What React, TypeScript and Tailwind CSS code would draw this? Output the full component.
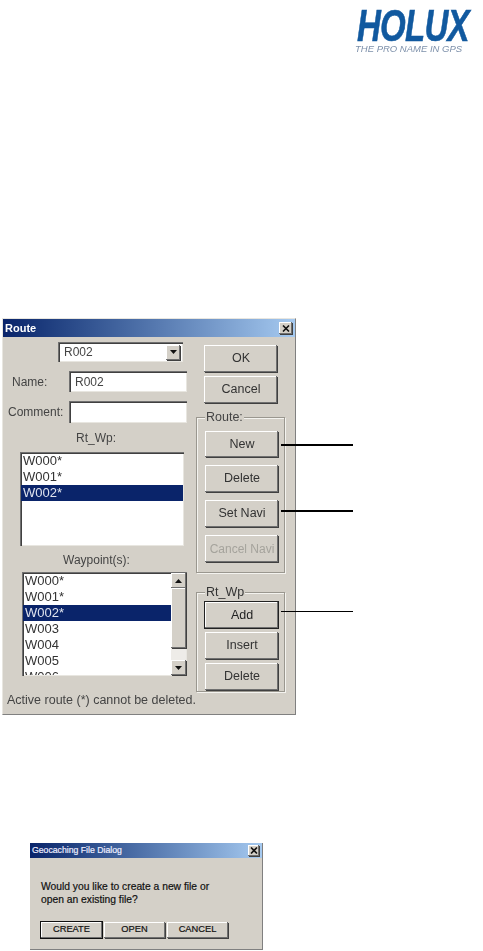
import React from 'react';

const bevel = 'bg-[#d4d0c8] shadow-[inset_-1px_-1px_0_#707070,inset_1px_1px_0_#ffffff,1px_1px_0_#404040]';
const sunken = 'bg-white shadow-[inset_1px_1px_0_#707070,inset_2px_2px_0_#404040,inset_-1px_-1px_0_#e8e6e0]';

function Btn({ label, className = '' }: { label: string; className?: string }) {
 return (
  <div className={`ml-[8px] w-[73px] pl-[1px] flex items-center justify-center text-[12.500px] text-[#333] ${bevel} ${className}`}>
   {label}
  </div>
 );
}

function Arrow({ up = false }: { up?: boolean }) {
 return (
  <svg width="7" height="4" viewBox="0 0 7 4" className={up ? 'rotate-180' : ''}>
   <path d="M0 0h7L3.500 4z" fill="#111" />
  </svg>
 );
}

function CloseBox({ size }: { size: string }) {
 return (
  <div className={`${size} flex items-center justify-center ${bevel}`}>
   <svg width="8" height="7" viewBox="0 0 8 7">
    <path d="M1 0.500l6 6M7 0.500l-6 6" stroke="#111" strokeWidth="1.600" />
   </svg>
  </div>
 );
}

function ListRow({ text, selected = false }: { text: string; selected?: boolean }) {
 return (
  <div className={`h-[16px] leading-[16px] pl-[2px] text-[13px] ${selected ? 'bg-[#0a246a] text-[#dfe3ee]' : 'text-[#333]'}`}>
   {text}
  </div>
 );
}

function RouteDialog() {
 return (
  <div className="relative ml-[2px] w-[294px] h-[397px] bg-[#d4d0c8] border border-[#e8e6e0] border-r-[#808080] border-b-[#808080] text-[12px] blur-[0.5px]">
   <div className="h-[18px] flex items-center justify-between pl-[2px] pr-[3px] bg-gradient-to-r from-[#0a246a] to-[#a6caf0]">
    <span className="text-[11px] font-bold text-white">Route</span>
    <CloseBox size="w-[13px] h-[12px]" />
   </div>

   <div className="flex">
    {/* left column */}
    <div className="w-[193px]">
     <div className={`mt-[5px] ml-[55px] w-[125px] h-[20px] flex items-center justify-between pl-[6px] pr-[3px] text-[#444] ${sunken}`}>
      <span>R002</span>
      <div className={`w-[14px] h-[15px] flex items-center justify-center ${bevel}`}>
       <Arrow />
      </div>
     </div>

     <div className="mt-[9px] flex items-center h-[21px]">
      <span className="ml-[9px] w-[57px] text-[#444]">Name:</span>
      <div className={`w-[118px] h-[21px] flex items-center pl-[6px] text-[#444] ${sunken}`}>R002</div>
     </div>
     <div className="mt-[9px] flex items-center h-[22px]">
      <span className="ml-[5px] w-[61px] text-[#444]">Comment:</span>
      <div className={`w-[118px] h-[22px] ${sunken}`} />
     </div>

     <div className="mt-[7px] ml-[73px] h-[16px] leading-[16px] text-[#444]">Rt_Wp:</div>
     <div className={`mt-[6px] ml-[17px] w-[164px] h-[94px] pt-[1px] px-[1px] ${sunken}`}>
      <ListRow text="W000*" />
      <ListRow text="W001*" />
      <ListRow text="W002*" selected />
     </div>

     <div className="mt-[6px] ml-[60px] h-[16px] leading-[16px] text-[#444]">Waypoint(s):</div>
     <div className={`mt-[4px] ml-[19px] w-[165px] h-[104px] flex p-[1px] overflow-hidden ${sunken}`}>
      <div className="flex-1 h-[102px] overflow-hidden">
       <ListRow text="W000*" />
       <ListRow text="W001*" />
       <ListRow text="W002*" selected />
       <ListRow text="W003" />
       <ListRow text="W004" />
       <ListRow text="W005" />
       <ListRow text="W006" />
      </div>
      <div className="w-[15px] h-[102px] flex flex-col bg-[#eeece8]">
       <div className={`h-[15px] flex items-center justify-center ${bevel}`}>
        <Arrow up />
       </div>
       <div className={`h-[60px] ${bevel}`} />
       <div className="flex-1" />
       <div className={`h-[15px] flex items-center justify-center ${bevel}`}>
        <Arrow />
       </div>
      </div>
     </div>

     <div className="mt-[16px] ml-[4px] h-[16px] leading-[16px] whitespace-nowrap text-[12.500px] text-[#444]">
      Active route (*) cannot be deleted.
     </div>
    </div>

    {/* right column */}
    <div className="w-[89px] pt-[8px]">
     <Btn label="OK" className="h-[27px]" />
     <Btn label="Cancel" className="h-[27px] mt-[4px]" />

     <div className="relative mt-[14px] h-[156px] pt-[13px] border border-[#9a978f] shadow-[inset_1px_1px_0_#f4f3ef,1px_1px_0_#f4f3ef]">
      <span className="absolute -top-[8px] left-[8px] px-[1px] bg-[#d4d0c8] leading-[15px] text-[12.500px] text-[#444]">Route:</span>
      <Btn label="New" className="h-[26px]" />
      <Btn label="Delete" className="h-[27px] mt-[8px]" />
      <Btn label="Set Navi" className="h-[27px] mt-[8px]" />
      <Btn label="Cancel Navi" className="h-[27px] mt-[8px] !text-[12px] !text-[#a5a39c]" />
     </div>

     <div className="relative mt-[19px] h-[100px] pt-[9px] border border-[#9a978f] shadow-[inset_1px_1px_0_#f4f3ef,1px_1px_0_#f4f3ef]">
      <span className="absolute -top-[8px] left-[8px] px-[1px] bg-[#d4d0c8] leading-[15px] text-[12.500px] text-[#333]">Rt_Wp</span>
      <Btn label="Add" className="h-[26px] outline outline-1 outline-[#222] !text-[#222]" />
      <Btn label="Insert" className="h-[27px] mt-[4px]" />
      <Btn label="Delete" className="h-[27px] mt-[4px]" />
     </div>
    </div>
   </div>
  </div>
 );
}

function GeoDialog() {
 return (
  <div className="ml-[30px] mt-[128px] w-[233px] h-[107px] bg-[#d4d0c8] border-b border-r border-[#808080] text-[10.300px] text-[#111] [-webkit-text-stroke:0.2px]">
   <div className="h-[15px] flex items-center justify-between pl-[2px] pr-[3px] bg-gradient-to-r from-[#0a246a] to-[#a6caf0]">
    <span className="text-[8.700px] text-[#eef]">Geocaching File Dialog</span>
    <CloseBox size="w-[11px] h-[11px]" />
   </div>
   <div className="mt-[22px] ml-[11px] leading-[13px]">
    <div>Would you like to create a new file or</div>
    <div>open an existing file?</div>
   </div>
   <div className="mt-[16px] ml-[11px] flex h-[16px] text-[9.300px]">
    <div className={`w-[61px] flex items-center justify-center outline outline-1 outline-[#111] ${bevel}`}>CREATE</div>
    <div className={`ml-[2px] w-[61px] flex items-center justify-center ${bevel}`}>OPEN</div>
    <div className={`ml-[2px] w-[61px] flex items-center justify-center ${bevel}`}>CANCEL</div>
   </div>
  </div>
 );
}

export default function App() {
 return (
  <div className="relative w-[483px] h-[951px] bg-white overflow-hidden font-['Liberation_Sans',Arial,sans-serif]">
   {/* logo */}
   <div className="h-[318px] pt-[7px] flex justify-end pr-[12px]">
    <div className="w-[116px] blur-[0.5px]">
     <div className="ml-[2px] text-[44px] leading-[38px] font-bold italic tracking-[-1px] whitespace-nowrap origin-left scale-x-[0.75] text-[#11599f] [-webkit-text-stroke:0.6px_#11599f]">HOLUX</div>
     <div className="text-[9.500px] leading-[8px] italic whitespace-nowrap text-[#7d90aa]">THE PRO NAME IN GPS</div>
    </div>
   </div>

   <RouteDialog />
   <GeoDialog />

   {/* callout lines */}
   <div className="absolute left-[281px] top-[444px] w-[72px] h-[2px] bg-black" />
   <div className="absolute left-[281px] top-[510px] w-[72px] h-[2px] bg-black" />
   <div className="absolute left-[281px] top-[611px] w-[72px] h-[1px] bg-black" />
  </div>
 );
}
